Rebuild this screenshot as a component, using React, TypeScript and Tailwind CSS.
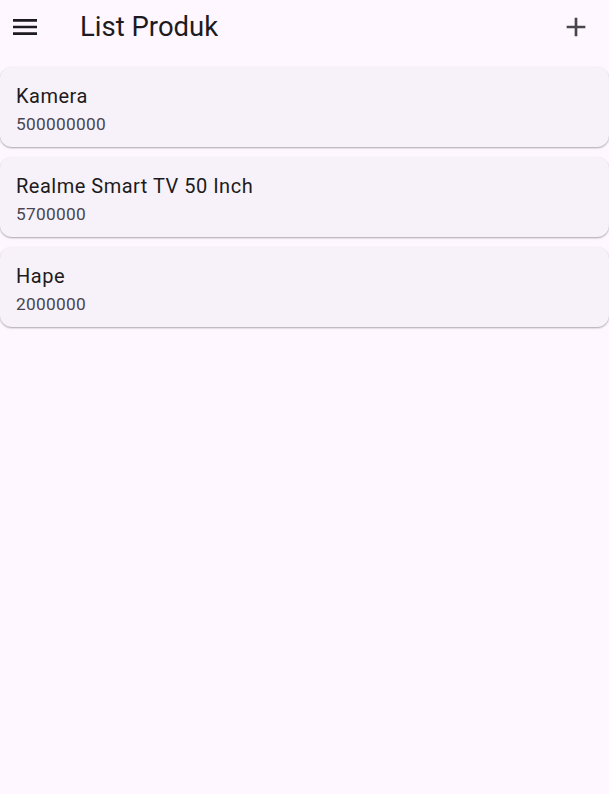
const PRODUK = [
  { nama: 'Kamera', harga: '500000000' },
  { nama: 'Realme Smart TV 50 Inch', harga: '5700000' },
  { nama: 'Hape', harga: '2000000' },
]

function MenuIcon() {
  return (
    <svg width="32" height="32" viewBox="0 0 24 24" fill="#1D1B20">
      <path d="M3 18h18v-2H3v2zm0-5h18v-2H3v2zm0-7v2h18V6H3z" />
    </svg>
  )
}

function PlusIcon() {
  return (
    <svg width="32" height="32" viewBox="0 0 24 24" fill="#49454F">
      <path d="M19 13h-6v6h-2v-6H5v-2h6V5h2v6h6v2z" />
    </svg>
  )
}

export default function App() {
  return (
    <div className="min-h-[794px] bg-[#FEF7FF] font-['Roboto',sans-serif]">
      <header className="flex items-center h-[54px] pl-[9px] pr-[17px]">
        <MenuIcon />
        <h1 className="ml-[39px] text-[27.5px] text-[#1D1B20] leading-none flex-1">
          List Produk
        </h1>
        <PlusIcon />
      </header>
      <ul className="flex flex-col gap-[10px] pt-[13px]">
        {PRODUK.map((p) => (
          <li
            key={p.nama}
            className="h-[80px] rounded-xl bg-[#F7F2FA] shadow-[0_1px_2px_rgba(0,0,0,0.25),0_1px_2px_0px_rgba(0,0,0,0.1)] px-4 pt-[18px]"
          >
            <div className="text-[20px] leading-[22px] tracking-[0.5px] text-[#1D1B20]">
              {p.nama}
            </div>
            <div className="mt-[7px] text-[17.3px] leading-[20px] tracking-[0.3px] text-[#49454F]">
              {p.harga}
            </div>
          </li>
        ))}
      </ul>
    </div>
  )
}
